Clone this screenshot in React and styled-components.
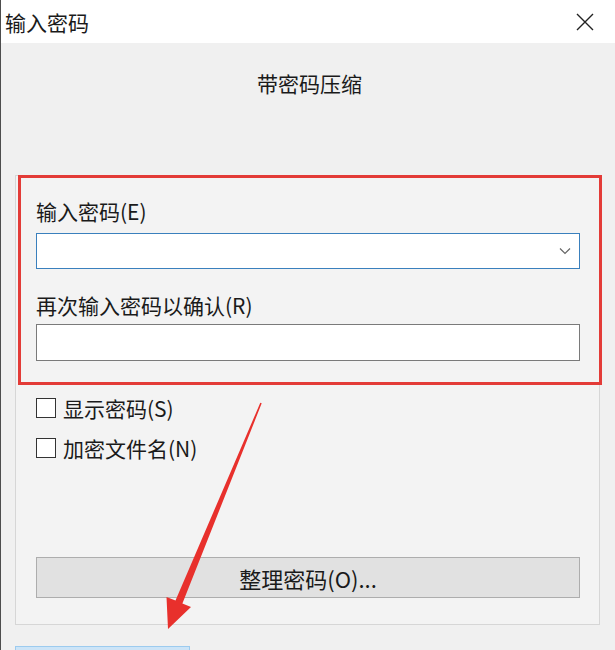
import React from 'react';
import styled, { createGlobalStyle } from 'styled-components';

const GlobalStyle = createGlobalStyle`
  html, body {
    margin: 0;
    padding: 0;
    overflow: hidden;
    background: #f0f0f0;
  }
  * {
    box-sizing: border-box;
  }
`;

const FONT = `"Noto Sans CJK SC", "Noto Sans", "Liberation Sans", sans-serif`;

const Window = styled.div`
  position: relative;
  width: 615px;
  height: 650px;
  overflow: hidden;
  background: #f0f0f0;
  border-left: 1px solid #4d4d4d;
  font-family: ${FONT};
  color: #1a1a1a;
`;

const TitleBar = styled.div`
  height: 43px;
  display: flex;
  align-items: center;
  justify-content: space-between;
  padding: 0 20px 0 4px;
  background: #ffffff;
  font-size: 21px;
  line-height: 28px;
`;

const CloseButton = styled.button`
  width: 20px;
  height: 20px;
  padding: 0;
  border: none;
  background: transparent;
  display: flex;
  align-items: center;
  justify-content: center;
  cursor: pointer;
`;

const Body = styled.div`
  padding: 26px 15px 0 14px;
  display: flex;
  flex-direction: column;
`;

const Subtitle = styled.div`
  text-align: center;
  font-size: 21px;
  line-height: 28px;
  margin-bottom: 78px;
  padding-left: 4px;
`;

const GroupBox = styled.div`
  height: 450px;
  border: 1px solid #d6d6d6;
  background: #f3f3f3;
  display: flex;
  flex-direction: column;
  padding: 0 19px 26px 20px;
`;

const Highlight = styled.section`
  margin: -1px -22px 0 -18px;
  border: 3px solid #e33b37;
  padding: 19px 19px 21px 15px;
  display: flex;
  flex-direction: column;
`;

const FieldLabel = styled.label`
  font-size: 21px;
  line-height: 28px;
  margin-bottom: ${(p) => p.$gap}px;
`;

const InputWrap = styled.div`
  position: relative;
  height: ${(p) => p.$height}px;
  border: 1px solid ${(p) => (p.$focused ? '#3a80bd' : '#7a7a7a')};
  background: #ffffff;
  display: flex;
  align-items: center;
  justify-content: flex-end;
  padding-right: 8px;
  margin-bottom: ${(p) => p.$after}px;
`;

const CheckRow = styled.label`
  display: flex;
  align-items: center;
  gap: 7px;
  font-size: 21px;
  line-height: 28px;
  height: 40px;
`;

const CheckList = styled.div`
  display: flex;
  flex-direction: column;
  margin-top: 3px;
`;

const Box = styled.span`
  width: 20px;
  height: 20px;
  border: 1px solid #333333;
  background: #ffffff;
  flex: none;
`;

const ManageButton = styled.button`
  margin-top: auto;
  height: 41px;
  width: 100%;
  border: 1px solid #adadad;
  background: #e1e1e1;
  font-family: ${FONT};
  font-size: 22px;
  line-height: 28px;
  color: #1a1a1a;
`;

const Footer = styled.div`
  display: flex;
  margin-top: 21px;
`;

const PrimaryButton = styled.button`
  width: 175px;
  height: 40px;
  border: 1px solid #9ccbef;
  background: #cce4f7;
`;

const ArrowLayer = styled.svg`
  position: absolute;
  left: 0;
  top: 0;
  pointer-events: none;
`;

const Chevron = () => (
  <svg width="12" height="8" viewBox="0 0 12 8">
    <path d="M1 1.5 L6 6.5 L11 1.5" fill="none" stroke="#666" strokeWidth="1.2" />
  </svg>
);

const App = () => {
  return (
    <Window>
      <GlobalStyle />
      <TitleBar>
        <span>输入密码</span>
        <CloseButton aria-label="关闭">
          <svg width="18" height="18" viewBox="0 0 18 18">
            <path d="M1 1 L17 17 M17 1 L1 17" stroke="#222" strokeWidth="1.4" />
          </svg>
        </CloseButton>
      </TitleBar>

      <Body>
        <Subtitle>带密码压缩</Subtitle>
        <GroupBox>
          <Highlight>
            <FieldLabel $gap={8}>输入密码(E)</FieldLabel>
            <InputWrap $height={36} $focused $after={22}>
              <Chevron />
            </InputWrap>
            <FieldLabel $gap={5}>再次输入密码以确认(R)</FieldLabel>
            <InputWrap $height={37} $after={0} />
          </Highlight>

          <CheckList>
            <CheckRow>
              <Box />
              显示密码(S)
            </CheckRow>
            <CheckRow>
              <Box />
              加密文件名(N)
            </CheckRow>
          </CheckList>

          <ManageButton>整理密码(O)...</ManageButton>
        </GroupBox>
        <Footer>
          <PrimaryButton />
        </Footer>
      </Body>

      <ArrowLayer width="615" height="650" viewBox="0 0 615 650">
        <polygon
          points="260.7,403.3 259.3,402.7 174.5,600.5 165.5,597 167,629 190,607 181.4,603.5"
          fill="#e8302c"
        />
      </ArrowLayer>
    </Window>
  );
};

export default App;
